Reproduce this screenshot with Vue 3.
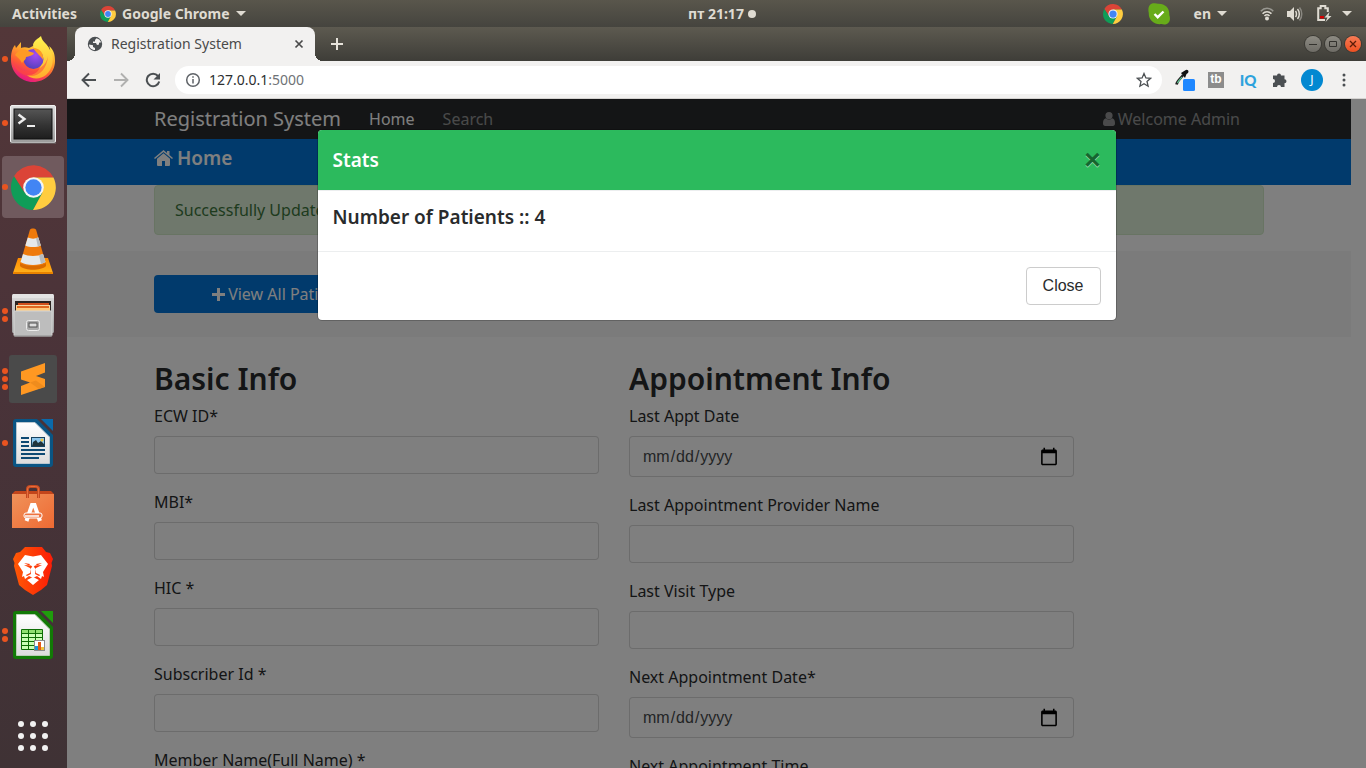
<script setup>
import { ref } from 'vue'

const launchers = [
  { name: 'firefox', label: 'Firefox', windows: 1 },
  { name: 'terminal', label: 'Terminal', windows: 1 },
  { name: 'chrome', label: 'Google Chrome', windows: 1, active: true },
  { name: 'vlc', label: 'VLC', windows: 0 },
  { name: 'files', label: 'Files', windows: 2 },
  { name: 'sublime', label: 'Sublime Text', windows: 3 },
  { name: 'writer', label: 'LibreOffice Writer', windows: 1 },
  { name: 'software', label: 'Ubuntu Software', windows: 0 },
  { name: 'brave', label: 'Brave', windows: 0 },
  { name: 'calc', label: 'LibreOffice Calc', windows: 2 }
]

const columns = [
  {
    title: 'Basic Info',
    fields: [
      { id: 'ecw', label: 'ECW ID*', type: 'text' },
      { id: 'mbi', label: 'MBI*', type: 'text' },
      { id: 'hic', label: 'HIC *', type: 'text' },
      { id: 'subscriber', label: 'Subscriber Id *', type: 'text' },
      { id: 'member', label: 'Member Name(Full Name) *', type: 'text' }
    ]
  },
  {
    title: 'Appointment Info',
    fields: [
      { id: 'last-date', label: 'Last Appt Date', type: 'date' },
      { id: 'provider', label: 'Last Appointment Provider Name', type: 'text' },
      { id: 'visit', label: 'Last Visit Type', type: 'text' },
      { id: 'next-date', label: 'Next Appointment Date*', type: 'date' },
      { id: 'next-time', label: 'Next Appointment Time', type: 'text' }
    ]
  }
]

const open = ref(true)
</script>

<template>
  <div class="desktop">
    <svg class="defs" aria-hidden="true">
      <defs>
        <symbol id="chrome-mark" viewBox="0 0 48 48">
          <path fill="#db4437" d="M24 24 14.500 29.500 3.200 12A24 24 0 0 1 45.300 13.300L24 13.300Z" />
          <path fill="#0f9d58" d="M3.200 12A24 24 0 0 0 23.500 48L33.500 29.500 24 24 14.500 29.500Z" />
          <path fill="#ffcd40" d="M23.500 48A24 24 0 0 0 45.300 13.300L24 13.300V24L33.500 29.500Z" />
          <circle cx="24" cy="24" r="11" fill="#f5f5f5" />
          <circle cx="24" cy="24" r="8.700" fill="#4285f4" />
        </symbol>
        <linearGradient id="fx-body" x1="0.8" y1="0" x2="0.3" y2="1">
          <stop offset="0" stop-color="#fff44f" /><stop offset="0.35" stop-color="#ffa62b" />
          <stop offset="0.65" stop-color="#ff5a36" /><stop offset="1" stop-color="#e3108a" />
        </linearGradient>
        <linearGradient id="fx-tail" x1="0" y1="0" x2="0" y2="1">
          <stop offset="0" stop-color="#fff44f" /><stop offset="1" stop-color="#ffab2d" />
        </linearGradient>
        <radialGradient id="fx-globe" cx="0.6" cy="0.3" r="0.8">
          <stop offset="0" stop-color="#a44cf5" /><stop offset="1" stop-color="#4a3fb5" />
        </radialGradient>
        <linearGradient id="steel" x1="0" y1="0" x2="0" y2="1">
          <stop offset="0" stop-color="#dedede" /><stop offset="1" stop-color="#9c9c9c" />
        </linearGradient>
        <linearGradient id="screen" x1="0" y1="0" x2="0" y2="1">
          <stop offset="0" stop-color="#555" /><stop offset="0.55" stop-color="#333" /><stop offset="1" stop-color="#1d1d1d" />
        </linearGradient>
        <linearGradient id="cone-base" x1="0" y1="0" x2="0" y2="1">
          <stop offset="0" stop-color="#ff8a00" /><stop offset="1" stop-color="#ffb21d" />
        </linearGradient>
        <linearGradient id="bag" x1="0" y1="0" x2="1" y2="1">
          <stop offset="0" stop-color="#f0925a" /><stop offset="1" stop-color="#ee6a33" />
        </linearGradient>
        <linearGradient id="lion" x1="0" y1="0" x2="1" y2="0">
          <stop offset="0" stop-color="#ff5a05" /><stop offset="1" stop-color="#fb1c07" />
        </linearGradient>
        <linearGradient id="sheet" x1="0" y1="0" x2="0" y2="1">
          <stop offset="0" stop-color="#fff" /><stop offset="1" stop-color="#dcdcdc" />
        </linearGradient>
      </defs>
    </svg>

    <header class="topbar">
      <div class="topbar-left">
        <button type="button" class="plain">Activities</button>
        <button type="button" class="plain app-menu">
          <svg width="16" height="16"><use href="#chrome-mark" /></svg>
          <span>Google Chrome</span>
          <span class="caret"></span>
        </button>
      </div>
      <button type="button" class="plain clock">пт 21:17<span class="notice"></span></button>
      <div class="topbar-right">
        <svg width="20" height="20"><use href="#chrome-mark" /></svg>
        <svg class="tray-skype" width="22" height="22" viewBox="0 0 22 22">
          <path fill="#67ab1a" d="M4 .5C7 0 8.500.8 10 .7 17 .3 21.800 5 21.300 12c1.200 3.500.7 6.500-1.300 8.300-1.700 1.500-4.500 1.500-6.500.8C6.500 22 .3 17 .8 10 0 7 0 1.700 4 .5Z" />
          <path d="m6.500 11 3.200 3.200L15.500 8.500" fill="none" stroke="#fff" stroke-width="2.400" />
        </svg>
        <button type="button" class="plain lang">en<span class="caret"></span></button>
        <svg class="tray-wifi" width="14" height="14" viewBox="0 0 14 14" fill="none">
          <path d="M.8 4.300C4.500.2 9.500.2 13.200 4.300" stroke="#989790" stroke-width="1.600" />
          <path d="M2.600 6.700c2.500-2.700 6.300-2.700 8.800 0M4.500 9c1.500-1.600 3.500-1.600 5 0" stroke="#dfdbd2" stroke-width="1.600" />
          <circle cx="7" cy="11.500" r="2" fill="#dfdbd2" />
        </svg>
        <svg class="tray-sound" width="16" height="14" viewBox="0 0 16 14" fill="none">
          <path fill="#dfdbd2" d="M0 4h3l4-4v14L3 10H0Z" />
          <path d="M8.500 4c1.300 1.500 1.300 4.500 0 6M10.500 2c2.400 2.600 2.400 7.400 0 10" stroke="#dfdbd2" stroke-width="1.500" />
          <path d="M12.500.5c3 3.500 3 9.500 0 13" stroke="#898780" stroke-width="1.500" />
        </svg>
        <svg class="tray-battery" width="15" height="17" viewBox="0 0 15 17">
          <path d="M8 15H1.200V3.200h2.500V1h4.600v2.200h2.500V7" fill="none" stroke="#dfdbd2" stroke-width="2" />
          <path fill="#d40000" d="M3 11h4v2.500H3Z" />
          <path fill="#dfdbd2" d="m12.500 7-5 5.500h3L8.500 17 14.500 11h-3Z" />
        </svg>
        <span class="caret"></span>
      </div>
    </header>

    <div class="workspace">
      <nav class="dock" aria-label="Launcher">
        <button
          v-for="app in launchers"
          :key="app.name"
          type="button"
          class="launcher"
          :class="{ active: app.active }"
          :aria-label="app.label"
        >
          <span class="dots"><i v-for="n in app.windows" :key="n"></i></span>

          <svg v-if="app.name === 'firefox'" width="46" height="48" viewBox="0 0 46 48">
            <path fill="url(#fx-body)" d="M1 23C1 17 3 12 5 10l1 3 5-6v6c2-1 5-1 8 0L29 8l10 10c2-2 1-5 0-7 5 4 6 9 6 15 0 12-10 21-22 21S1 37 1 25Z" />
            <path fill="url(#fx-tail)" d="M31 1c1 6 7 8 9 14 5 8 3 19-4 25-6 5-15 4-19 0 11 1 16-9 13-17-2-4-6-8-7-13 1-5 5-6 8-9Z" />
            <circle cx="23.500" cy="24" r="10" fill="url(#fx-globe)" />
            <path fill="#ff9a25" d="M5 20c3-5 9-7 13-4l6 2c-1 3-5 3-8 4 0 3-3 4-4 6-2-4-5-6-7-8Z" />
            <path fill="#ff9a25" d="M23 13c7 0 11 5 10 12-2-4-5-5-10-12Z" />
            <path fill="#ff4b3b" d="M3 25c3 11 17 15 27 8 5-3 7-7 8-12-1 13-9 21-19 20C10 40 4 34 3 25Z" opacity="0.55" />
          </svg>

          <svg v-else-if="app.name === 'terminal'" width="46" height="42" viewBox="0 -3 46 42">
            <rect x="0.500" y="0.500" width="45" height="37" rx="1.500" fill="url(#steel)" stroke="#f1f1f1" />
            <path d="M0 38h46" stroke="#777" />
            <rect x="4" y="4" width="38" height="30" fill="url(#screen)" stroke="#111" />
            <path d="m8.500 9.500 6 4.500-6 4.500" fill="none" stroke="#eee" stroke-width="2.400" />
            <path d="M17 21h8" stroke="#eee" stroke-width="2" />
          </svg>

          <svg v-else-if="app.name === 'chrome'" width="45" height="45"><use href="#chrome-mark" /></svg>

          <svg v-else-if="app.name === 'vlc'" width="42" height="47" viewBox="0 0 42 47">
            <path fill="url(#cone-base)" d="M6 30h30l5 15H1Z" />
            <path fill="#e98300" d="M1 44h40v2H1Z" />
            <path fill="#ef7a0b" d="M18 1.500c1-1.500 5-1.500 6 0L34 36c-2 6-24 6-26 0Z" />
            <path fill="#e5e8ea" d="M15.800 9.500c3 1.500 7.500 1.500 10.500 0l2.500 8c-4 2-11.500 2-15.500 0ZM11 26c5 2.500 15 2.500 20 0l2.500 8c-6 4-19 4-25 0Z" />
            <path fill="#b7bcc0" d="m24 10 2.300-.5 2.500 8-3 1ZM27 27l4-1 2.500 8-4.500 2Z" />
            <path fill="#d96a00" d="M8 35c5 4 21 4 26 0v3c-5 5-21 5-26 0Z" />
          </svg>

          <svg v-else-if="app.name === 'files'" width="42" height="44" viewBox="0 0 42 44">
            <rect y="1" width="42" height="39" rx="1.500" fill="url(#steel)" />
            <path fill="#e4e4e4" d="M1 1h40l1 4H0Z" />
            <path fill="#2b2320" d="M3 8h36v11H3Z" />
            <path fill="#d2501b" d="M6 10h31v3H6Z" />
            <path fill="#f5d7a1" d="M4 12h34v5H4Z" />
            <path fill="#e0681f" d="M5 13h32v2H5Z" />
            <path fill="#ffc97c" d="M4 15h34v3H4Z" />
            <rect x="2" y="18" width="38" height="25" rx="1" fill="#bdbdbd" stroke="#d6d6d6" />
            <path stroke="#838383" d="M2 43h38" />
            <rect x="14.500" y="27.500" width="13" height="10" rx="2" fill="#aaa" stroke="#ececec" />
            <rect x="17" y="30" width="8" height="4" fill="#ddd" stroke="#4e4e4e" />
          </svg>

          <svg v-else-if="app.name === 'sublime'" width="48" height="48" viewBox="0 0 48 48">
            <rect width="48" height="48" rx="3" fill="#4a4a4a" />
            <path fill="#ff9822" d="M12 16.500 36 8v9.500L27 21l9 3v8L12 40v-9l9-3.500-9-3Z" />
            <path fill="#e5841a" d="m21 27.500 6-2 9 6.500-6 2Z" opacity="0.6" />
          </svg>

          <svg v-else-if="app.name === 'writer'" width="40" height="48" viewBox="0 0 40 48">
            <path fill="#0a5584" d="M3 0h21l16 16v29a3 3 0 0 1-3 3H3a3 3 0 0 1-3-3V3a3 3 0 0 1 3-3Z" />
            <path fill="#0b6aab" d="M28 0h12v12Z" />
            <path fill="url(#sheet)" stroke="#b9c6cf" d="M3.500 3.500H22L36.500 18v26.500h-33Z" />
            <path stroke="#0e4a73" stroke-width="2" d="M8 19h8M8 23h8M8 27h8M8 31h24M8 35h24M8 39h18" />
            <rect x="18.500" y="18.500" width="13" height="9" fill="#8cc6ed" stroke="#17425f" />
            <path fill="#21343c" d="m19 27 1-4 3-2 2 3 3-2 3 3v2Z" /><circle cx="29" cy="21" r="1.500" fill="#f0c43e" />
          </svg>

          <svg v-else-if="app.name === 'software'" width="42" height="44" viewBox="0 0 42 44">
            <path fill="#c3451b" d="m3 6-3 3h42l-3-3Z" />
            <path fill="url(#bag)" d="M0 9h42v34H0Z" />
            <path d="M15.500 13V4q0-2.500 3-2.500h5q3 0 3 2.500v9" fill="none" stroke="#c44a20" stroke-width="3" />
            <path d="M15.500 13V4q0-2.500 3-2.500h5q3 0 3 2.500v9" fill="none" stroke="#e66c3d" stroke-width="1" />
            <path d="M14.500 36 20 20h2.500L28 36" fill="none" stroke="#fff" stroke-width="4" />
            <rect x="12" y="28" width="18" height="5" rx="2" fill="#ee7441" stroke="#fff" />
            <path d="M13 31h14" stroke="#fff" stroke-width="1.500" />
          </svg>

          <svg v-else-if="app.name === 'brave'" width="40" height="48" viewBox="0 0 40 48">
            <path fill="url(#lion)" d="M12 0h17l4 5 4 1 3 6-1.500 4L39 19 34 38l-6 5-8 5-8-5-6-5L1 19l.5-3L0 12l3-6 4-1Z" />
            <path fill="#fff" d="m12 8 8 1.500L28 8l7 9-5 8 1 5-8-4v-5l6-3-7 .5-2 2-2-2-7-.5 6 3v5l-8 4 1-5-5-8Z" />
            <path fill="#fff" d="m17 22 3-3 3 3-1 5 4 2 4-3-2 6-4-3-4 2-4-2-4 3-2-6 4 3 4-2ZM14 33l6-3 6 3-6 5Z" />
            <path fill="#fb3c0a" d="m11 16 6 1-1 1.500ZM29 16l-6 1 1 1.500Z" />
          </svg>

          <svg v-else width="40" height="48" viewBox="0 0 40 48">
            <path fill="#127a06" d="M3 0h21l16 16v29a3 3 0 0 1-3 3H3a3 3 0 0 1-3-3V3a3 3 0 0 1 3-3Z" />
            <path fill="#1f9c0c" d="M28 0h12v12Z" />
            <path fill="url(#sheet)" stroke="#b9cdb5" d="M3.500 3.500H22L36.500 18v26.500h-33Z" />
            <path fill="#caffb5" stroke="#0e6d05" d="M8.500 18.500h21v20h-21Z" />
            <path fill="#8fe070" d="M9 19h20v3H9Z" />
            <path stroke="#0e6d05" d="M8 22.500h22M8 26.500h22M8 30.500h22M8 34.500h22M15.500 18v21M22.500 18v21" />
            <rect x="21.500" y="29.500" width="10" height="10" fill="#fff" stroke="#8c8c8c" />
            <path fill="#1f95d8" d="M22 35h3v4h-3Z" /><path fill="#e35a16" d="M25 31h3v8h-3Z" /><path fill="#f0c43e" d="M28 36h3v3h-3Z" />
          </svg>
        </button>

        <button type="button" class="launcher all-apps" aria-label="Show Applications">
          <svg width="30" height="30" viewBox="0 0 30 30" fill="#f2f2f2">
            <circle v-for="n in 9" :key="n" :cx="3 + ((n - 1) % 3) * 12" :cy="3 + Math.floor((n - 1) / 3) * 12" r="3" />
          </svg>
        </button>
      </nav>

      <section class="browser">
        <div class="tabstrip">
          <div class="tab">
            <svg width="16" height="16" viewBox="0 0 16 16">
              <circle cx="8" cy="8" r="7.200" fill="#4b4f52" />
              <path fill="#f2f1f0" d="M9.500 2.300 8 4v1.500H6V7h3l1 2 2-.5V6.800l2.200-.6A6.500 6.500 0 0 0 9.500 2.300ZM2 8.500l4 .8V11l2 1v2C4.500 14 2 11.500 2 8.500Z" />
            </svg>
            <span class="tab-title">Registration System</span>
            <button type="button" class="plain" aria-label="Close tab">
              <svg width="10" height="10" viewBox="0 0 10 10"><path d="m1.500 1.500 7 7m0-7-7 7" stroke="#4a4a4a" stroke-width="1.700" /></svg>
            </button>
          </div>
          <button type="button" class="plain new-tab" aria-label="New tab">
            <svg width="12" height="12" viewBox="0 0 12 12"><path d="M6 0v12M0 6h12" stroke="#e6e2da" stroke-width="2" /></svg>
          </button>
          <div class="controls">
            <button type="button" class="control" aria-label="Minimize"><svg width="8" height="8" viewBox="0 0 8 8"><path d="M0 4.500h8" stroke="#33322e" /></svg></button>
            <button type="button" class="control" aria-label="Maximize"><svg width="8" height="8" viewBox="0 0 8 8"><path d="M.5 1.500h7v5h-7Z" fill="none" stroke="#33322e" /></svg></button>
            <button type="button" class="control close" aria-label="Close window"><svg width="8" height="8" viewBox="0 0 8 8"><path d="m1 1 6 6m0-6-6 6" stroke="#5a1c08" stroke-width="1.300" /></svg></button>
          </div>
        </div>

        <div class="toolbar">
          <button type="button" class="tool" aria-label="Back"><svg width="16" height="16" viewBox="0 0 16 16" fill="none" stroke="#4b4f52" stroke-width="1.900"><path d="M15 8H2M8 1.500 1.500 8 8 14.500" /></svg></button>
          <button type="button" class="tool" aria-label="Forward"><svg width="16" height="16" viewBox="0 0 16 16" fill="none" stroke="#b0b0af" stroke-width="1.900"><path d="M1 8h13M8 1.500 14.500 8 8 14.500" /></svg></button>
          <button type="button" class="tool" aria-label="Reload"><svg width="16" height="16" viewBox="0 0 16 16"><path d="M13 4A6.300 6.300 0 1 0 14.200 9.500" fill="none" stroke="#4b4f52" stroke-width="2" /><path fill="#4b4f52" d="M15 1v6.500H8.500Z" /></svg></button>
          <div class="omnibox">
            <svg width="16" height="16" viewBox="0 0 16 16" fill="none" stroke="#5f6368" stroke-width="1.500"><circle cx="8" cy="8" r="6.300" /><path d="M8 7v4.500M8 4.200v1.600" /></svg>
            <span class="url">127.0.0.1<span class="port">:5000</span></span>
            <svg width="16" height="16" viewBox="0 0 16 16" fill="none" stroke="#4b4f52" stroke-width="1.300"><path d="m8 1.500 1.900 4.400 4.700.4-3.600 3.200 1.100 4.700L8 11.700l-4.100 2.500L5 9.500 1.400 6.300l4.700-.4Z" /></svg>
          </div>
          <button type="button" class="tool" aria-label="Color picker">
            <svg width="22" height="22" viewBox="0 0 22 22">
              <path d="M3.500 15.500c.5-4 5-6.500 6.500-9.500" fill="none" stroke="#222" stroke-width="2.600" />
              <path d="M4.500 14c1-2.500 3-4 4.500-6" fill="none" stroke="#5fc795" stroke-width="1.200" />
              <path fill="#111" d="m8 4 4-2.500c2-2 4.500 0 3 2.500L13.500 5l-1.500 4Z" />
              <rect x="10" y="10" width="12" height="12" rx="1.500" fill="#1f87ff" />
            </svg>
          </button>
          <button type="button" class="tool" aria-label="TubeBuddy"><span class="tb">tb</span></button>
          <button type="button" class="tool iq" aria-label="Keywords">IQ</button>
          <button type="button" class="tool" aria-label="Extensions"><svg width="16" height="16" viewBox="0 0 16 16"><path fill="#4b4f52" d="M5 3.500a2 2 0 0 1 4 0h3.500v3.700a2 2 0 1 1 0 4V15H9a2 2 0 0 0-4 0H1v-4a2 2 0 0 0 0-4V3.500Z" /></svg></button>
          <button type="button" class="tool" aria-label="Profile"><span class="avatar">J</span></button>
          <button type="button" class="tool" aria-label="Menu"><svg width="4" height="14" viewBox="0 0 4 14" fill="#4b4f52"><circle cx="2" cy="2" r="1.500" /><circle cx="2" cy="7" r="1.500" /><circle cx="2" cy="12" r="1.500" /></svg></button>
        </div>

        <div class="viewport">
          <main class="page">
            <nav class="navbar">
              <div class="container nav-row">
                <a href="#" class="brand">Registration System</a>
                <a href="#" class="nav-link current">Home</a>
                <a href="#" class="nav-link">Search</a>
                <a href="#" class="nav-link user">
                  <svg width="12" height="14" viewBox="0 0 12 14"><path fill="currentColor" d="M6 0a3.400 3.400 0 0 1 0 7.200A3.400 3.400 0 0 1 6 0ZM2.700 6.300c2 1.900 4.600 1.900 6.600 0C11.300 6.700 12 9 12 11.300c0 1.700-.8 2.700-2.200 2.700H2.200C.8 14 0 13 0 11.300 0 9 .7 6.700 2.700 6.300Z" /></svg>
                  Welcome Admin
                </a>
              </div>
            </nav>
            <header class="banner">
              <div class="container">
                <h4>
                  <svg width="19" height="16" viewBox="0 0 19 16"><path fill="#fff" d="M9.500 3.300 16 8.700V15a1 1 0 0 1-1 1h-4v-5H8v5H4a1 1 0 0 1-1-1V8.700ZM9.500 0 13 2.900V1h2.500v4L19 7.900l-1 1.100-8.500-7L1 9 0 7.900Z" /></svg>
                  Home
                </h4>
              </div>
            </header>
            <div class="container"><div class="alert" role="alert">Successfully Updated</div></div>
            <section class="actions">
              <div class="container">
                <button type="button" class="primary">
                  <svg width="13" height="13" viewBox="0 0 13 13"><path fill="#fff" d="M5 0h3v5h5v3H8v5H5V8H0V5h5Z" /></svg>
                  View All Patients
                </button>
              </div>
            </section>
            <form class="container form">
              <div v-for="col in columns" :key="col.title" class="column">
                <h2>{{ col.title }}</h2>
                <div v-for="f in col.fields" :key="f.id" class="group">
                  <label :for="f.id">{{ f.label }}</label>
                  <input :id="f.id" :type="f.type" class="field" :class="{ date: f.type === 'date' }" />
                </div>
              </div>
            </form>
          </main>

          <div v-if="open" class="backdrop">
            <div class="modal" role="dialog" aria-modal="true" aria-labelledby="modal-title">
              <div class="modal-header">
                <h4 id="modal-title">Stats</h4>
                <button type="button" class="dismiss" aria-label="Close" @click="open = false">×</button>
              </div>
              <div class="modal-body"><h5>Number of Patients :: 4</h5></div>
              <div class="modal-footer">
                <button type="button" class="secondary" @click="open = false">Close</button>
              </div>
            </div>
          </div>
        </div>
      </section>
    </div>
  </div>
</template>

<style>
body {
  margin: 0;
  overflow: hidden;
}
</style>

<style scoped>
.desktop,
.desktop * {
  box-sizing: border-box;
}
.desktop {
  display: flex;
  flex-direction: column;
  height: 100vh;
  overflow: hidden;
  font-family: "Noto Sans", "Open Sans", sans-serif;
  font-size: 16px;
  line-height: 24px;
  color: #292b2c;
}
.defs {
  position: absolute;
  width: 0;
  height: 0;
}
svg {
  display: block;
  flex: none;
}
a {
  text-decoration: none;
}
.plain {
  display: flex;
  align-items: center;
  padding: 0;
  border: 0;
  background: none;
  color: inherit;
  font: inherit;
}

.topbar {
  display: grid;
  grid-template-columns: 1fr auto 1fr;
  align-items: center;
  flex: none;
  height: 27px;
  padding: 0 14px 0 12px;
  background: linear-gradient(#59564c, #45443e);
  color: #dfdbd2;
  font-size: 14px;
  line-height: 20px;
  font-weight: 700;
}
.topbar-left,
.topbar-right {
  display: flex;
  align-items: center;
}
.app-menu {
  gap: 6px;
  margin-left: 23px;
}
.topbar-right {
  justify-content: flex-end;
}
.caret {
  border: 5px solid transparent;
  border-top-color: #dfdbd2;
  border-bottom: 0;
}
.notice {
  width: 8px;
  height: 8px;
  margin-left: 4px;
  border-radius: 50%;
  background: #dfdbd2;
}
.clock {
  margin-left: 80px;
}
.tray-skype {
  margin-left: 25px;
}
.lang {
  gap: 6px;
  margin-left: 24px;
}
.tray-wifi {
  margin-left: 33px;
}
.tray-sound {
  margin-left: 13px;
}
.tray-battery {
  margin: 0 10px 0 14px;
}

.workspace {
  display: flex;
  flex: 1;
  min-height: 0;
}
.dock {
  display: flex;
  flex-direction: column;
  gap: 2px;
  flex: none;
  width: 67px;
  padding: 1px 3px 1px 2px;
  background: linear-gradient(#533739, #4a3339 45%, #3f3235);
}
.launcher {
  position: relative;
  display: flex;
  align-items: center;
  justify-content: center;
  flex: none;
  width: 62px;
  height: 62px;
  padding: 0;
  border: 0;
  border-radius: 4px;
  background: none;
}
.launcher.active {
  background: #705a5e;
}
.all-apps {
  margin-top: auto;
}
.dots {
  position: absolute;
  top: 0;
  bottom: 0;
  left: 0;
  display: flex;
  flex-direction: column;
  justify-content: center;
  gap: 2px;
}
.dots i {
  width: 6px;
  height: 6px;
  border-radius: 50%;
  background: #e95420;
}

.browser {
  display: flex;
  flex-direction: column;
  flex: 1;
  min-width: 0;
}
.tabstrip {
  display: flex;
  align-items: center;
  flex: none;
  height: 34px;
  padding: 0 5px 0 8px;
  background: linear-gradient(#5d5a50, #3e3d38);
}
.tab {
  position: relative;
  display: flex;
  align-items: center;
  width: 240px;
  height: 34px;
  padding: 0 11px 0 12px;
  border-radius: 8px 8px 0 0;
  background: #f2f1f0;
  color: #4a4a4a;
  font-size: 14px;
}
.tab::before,
.tab::after {
  content: "";
  position: absolute;
  bottom: 0;
  width: 8px;
  height: 8px;
}
.tab::before {
  right: 100%;
  background: radial-gradient(circle at 0 0, transparent 8px, #f2f1f0 8px);
}
.tab::after {
  left: 100%;
  background: radial-gradient(circle at 100% 0, transparent 8px, #f2f1f0 8px);
}
.tab-title {
  flex: 1;
  margin-left: 8px;
}
.new-tab {
  margin-left: 16px;
}
.controls {
  display: flex;
  gap: 4px;
  margin-left: auto;
}
.control {
  display: flex;
  align-items: center;
  justify-content: center;
  width: 16px;
  height: 16px;
  padding: 0;
  border: 0;
  border-radius: 50%;
  background: linear-gradient(#8d8b83, #6e6c66);
  box-shadow: 0 0 0 1px #3b3a35;
}
.control.close {
  background: linear-gradient(#f77b55, #ed5021);
}
.toolbar {
  display: flex;
  align-items: center;
  flex: none;
  height: 38px;
  padding: 0 6px;
  border-bottom: 1px solid #d5d3d1;
  background: #f2f1f0;
}
.tool {
  display: flex;
  align-items: center;
  justify-content: center;
  width: 32px;
  height: 32px;
  padding: 0;
  border: 0;
  background: none;
}
.omnibox {
  display: flex;
  align-items: center;
  flex: 1;
  height: 28px;
  margin: 0 6px;
  padding: 0 10px;
  border-radius: 14px;
  background: #fff;
}
.url {
  flex: 1;
  margin-left: 8px;
  color: #2d2f31;
  font-size: 14px;
}
.port {
  color: #6f7276;
}
.tb {
  width: 16px;
  height: 16px;
  background: #8c8c8c;
  color: #fff;
  font: 700 12px/15px "Liberation Sans", sans-serif;
}
.iq {
  color: #2ea3dd;
  font: 900 15px/16px Lato, sans-serif;
}
.avatar {
  width: 22px;
  height: 22px;
  border-radius: 50%;
  background: #0288d1;
  color: #fff;
  font: 12px/22px "Noto Sans", sans-serif;
}

.viewport {
  position: relative;
  flex: 1;
  min-height: 0;
  overflow: hidden;
  background: #fff;
}
.page {
  padding-right: 15px;
}
.container {
  max-width: 1140px;
  margin: 0 auto;
  padding: 0 15px;
}
.navbar {
  padding: 8px 0;
  background: #292b2c;
}
.nav-row {
  display: flex;
  align-items: center;
  gap: 28px;
}
.brand {
  color: #fff;
  font-size: 20px;
}
.nav-link {
  display: flex;
  align-items: center;
  gap: 3px;
  color: rgba(255, 255, 255, 0.5);
}
.nav-link.current {
  color: #fff;
}
.user {
  margin-left: auto;
  margin-right: 24px;
}
.banner {
  height: 46px;
  padding-top: 8px;
  background: #0275d8;
  color: #fff;
}
h2,
h4,
h5 {
  margin: 0;
  font-weight: 600;
}
h4,
h5 {
  font-size: 19px;
}
h5 {
  line-height: 22px;
}
.banner h4 {
  display: flex;
  align-items: center;
  gap: 4px;
  line-height: 22px;
}
.alert {
  margin-bottom: 16px;
  padding: 12px 20px;
  border: 1px solid #d0e9c6;
  border-radius: 4px;
  background: #dff0d8;
  color: #3c763d;
}
.actions {
  padding: 24px 0;
  background: #f7f7f7;
}
.primary {
  display: flex;
  align-items: center;
  justify-content: center;
  gap: 3px;
  width: 255px;
  height: 38px;
  padding: 0;
  border: 0;
  border-radius: 4px;
  background: #0275d8;
  color: #fff;
  font: inherit;
}
.form {
  display: grid;
  grid-template-columns: 5fr 5fr 2fr;
  padding: 24px 0 0;
}
.column {
  padding: 0 15px;
}
h2 {
  margin-bottom: 8px;
  font-size: 30px;
  line-height: 35px;
}
.group {
  margin-bottom: 16px;
}
.group label {
  display: block;
  margin-bottom: 8px;
}
.field {
  display: block;
  width: 100%;
  height: 38px;
  padding: 8px 12px;
  border: 1px solid rgba(0, 0, 0, 0.15);
  border-radius: 4px;
  background: #fff;
  color: #464a4c;
  font: 16px/20px "Liberation Sans", sans-serif;
}
.field.date {
  height: 41px;
}
.field::-webkit-calendar-picker-indicator {
  width: 20px;
  height: 20px;
  margin-right: 2px;
  padding: 0;
}

.backdrop {
  position: absolute;
  inset: 0;
  padding: 30px 15px;
  background: rgba(0, 0, 0, 0.5);
}
.modal {
  max-width: 800px;
  margin: 0 auto;
  overflow: hidden;
  border: 1px solid rgba(0, 0, 0, 0.2);
  border-radius: 5px;
  background: #fff;
  background-clip: padding-box;
}
.modal-header {
  display: flex;
  align-items: center;
  justify-content: space-between;
  padding: 15px;
  border-bottom: 1px solid #eceeef;
  background: #2cba5d;
  background-clip: padding-box;
  color: #fff;
}
.modal-header h4 {
  line-height: 30px;
}
.dismiss {
  padding: 0;
  border: 0;
  background: none;
  color: #16652f;
  font: 700 28px/24px "Liberation Sans", sans-serif;
  line-height: 24px;
  text-shadow: 0 1px 0 rgba(255, 255, 255, 0.5);
}
.modal-body {
  padding: 15px 15px 23px;
}
.modal-footer {
  display: flex;
  justify-content: flex-end;
  padding: 15px;
  border-top: 1px solid #eceeef;
}
.secondary {
  height: 38px;
  padding: 0 16px;
  border: 1px solid #ccc;
  border-radius: 4px;
  background: #fff;
  color: #292b2c;
  font: 16px/20px "Liberation Sans", sans-serif;
}
</style>
